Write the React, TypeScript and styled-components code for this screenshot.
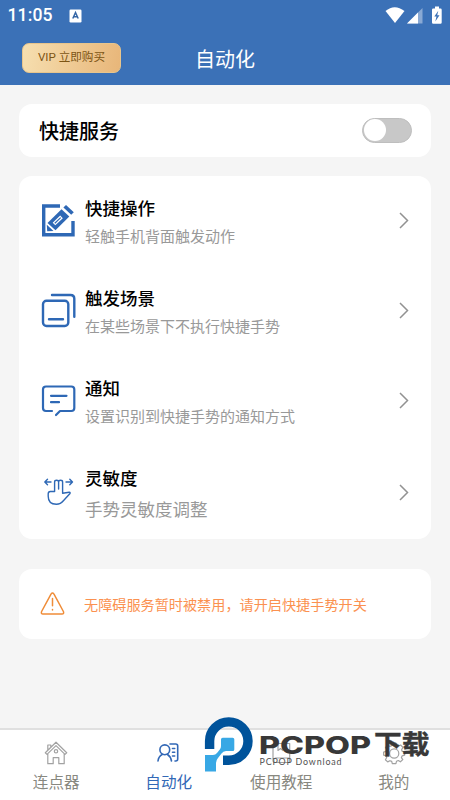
import React from "react";
import styled, { createGlobalStyle } from "styled-components";

const Global = createGlobalStyle`
  * { box-sizing: border-box; }
  body {
    margin: 0;
    background: #f5f5f5;
    font-family: "Noto Sans CJK SC", "Noto Sans", sans-serif;
  }
`;

const Screen = styled.div`
  width: 450px;
  height: 800px;
  display: flex;
  flex-direction: column;
  background: #f5f5f5;
  overflow: hidden;
`;

const Header = styled.header`
  height: 85px;
  flex: none;
  background: #3b71b7;
  color: #fff;
`;

const StatusBar = styled.div`
  height: 31px;
  padding: 0 8px 0 7.5px;
  display: flex;
  align-items: center;
  justify-content: space-between;
`;

const StatusGroup = styled.div`
  display: flex;
  align-items: center;
`;

const Clock = styled.span`
  width: 61px;
  font: 500 17.6px/31px Roboto, sans-serif;
  letter-spacing: 0.1px;
`;

const TitleBar = styled.div`
  height: 54px;
  padding: 0 22px;
  display: grid;
  grid-template-columns: 1fr auto 1fr;
  align-items: start;
`;

const VipButton = styled.button`
  width: 99px;
  height: 30px;
  margin-top: 11.5px;
  padding: 0 0 2px;
  border: 1px solid #e8c58c;
  border-radius: 7px;
  background: linear-gradient(100deg, #f6dfb0, #e8b679);
  color: #7d5514;
  font: 400 11.6px/24px Roboto, "Noto Sans CJK SC", sans-serif;
`;

const Title = styled.h1`
  margin: 13px 0 0;
  font-size: 20px;
  font-weight: 400;
  line-height: 30px;
`;

const Content = styled.main`
  flex: 1;
  padding: 19px 19px 0;
`;

const Card = styled.section<{ $height: number; $gap: number }>`
  height: ${(p) => p.$height}px;
  margin-bottom: ${(p) => p.$gap}px;
  border-radius: 13px;
  background: #fff;
  display: flex;
`;

const ServiceCard = styled(Card)`
  align-items: center;
  justify-content: space-between;
  padding: 0 19px 0 20px;
`;

const ServiceLabel = styled.span`
  font-size: 20px;
  font-weight: 500;
  line-height: 30px;
  color: #000;
`;

const Toggle = styled.div`
  width: 50px;
  height: 25px;
  margin-top: -1px;
  border-radius: 13px;
  padding: 0.5px;
  background: #c8c8c8;
  border: 1px solid #bebebe;
`;

const Knob = styled.div`
  width: 22px;
  height: 22px;
  border-radius: 50%;
  background: #fff;
`;

const ListCard = styled(Card)`
  flex-direction: column;
`;

const Row = styled.div<{ $shift: number }>`
  height: 90px;
  flex: none;
  display: grid;
  grid-template-columns: 66px 1fr 20px;
  padding-right: 16px;
  align-items: start;
  > svg { margin-top: ${(p) => 24 + p.$shift}px; }
  > svg:first-child { margin-left: 19px; }
`;

const RowTitle = styled.div`
  margin-top: 19px;
  height: 27px;
  font-size: 17.5px;
  font-weight: 500;
  line-height: 26px;
  color: #000;
`;

const RowNote = styled.div<{ $large?: boolean }>`
  margin-top: ${(p) => (p.$large ? 4 : 1)}px;
  font-size: ${(p) => (p.$large ? 17.5 : 15)}px;
  line-height: 26px;
  color: #999;
`;

const WarningCard = styled(Card)`
  align-items: center;
  padding-left: 20px;
  gap: 18px;
`;

const WarningText = styled.span`
  font-size: 14.15px;
  color: #fb9150;
`;

const TabBar = styled.nav`
  position: relative;
  flex: none;
  height: 72px;
  border-top: 2px solid #e0e0e0;
  background: #fff;
  display: grid;
  grid-template-columns: repeat(4, 1fr);
`;

const Tab = styled.div<{ $active?: boolean }>`
  display: flex;
  flex-direction: column;
  align-items: center;
  padding-top: 10px;
  gap: 3px;
  color: ${(p) => (p.$active ? "#3268b6" : "#888880")};
  font-size: 15.6px;
  line-height: 24px;
`;

const TabIcon = styled.svg.attrs({ width: 26, height: 26, viewBox: "0 0 26 26", fill: "none" })<{ $active?: boolean }>`
  stroke: ${(p) => (p.$active ? "#3268b6" : "#a2a2a2")};
  stroke-width: ${(p) => (p.$active ? 1.6 : 1.2)};
  stroke-linecap: round;
  stroke-linejoin: round;
`;

const Watermark = styled.svg`
  position: absolute;
  left: 200px;
  top: -20px;
`;

const Wordmark = styled.text`
  font: 800 24.3px Inter, sans-serif;
  fill: #383838;
`;

const WordmarkSuffix = styled.text`
  font: 700 26.5px "Noto Sans CJK SC", sans-serif;
  fill: #383838;
  stroke: #383838;
  stroke-width: 0.4px;
`;

const Tagline = styled.text`
  font: 400 8.9px Lato, sans-serif;
  fill: #505050;
`;

const RowIcon = styled.svg.attrs({ width: 40, height: 40, viewBox: "0 0 40 40", fill: "none" })<{ $weight?: number }>`
  stroke: #2e68b5;
  stroke-width: ${(p) => p.$weight ?? 2.4};
  stroke-linecap: round;
  stroke-linejoin: round;
`;

const EditIcon = () => (
  <RowIcon>
    <path d="M22 6H5.7v28.8H35V21" strokeWidth="3.4" strokeLinecap="butt" strokeLinejoin="miter" />
    <path d="M23.5 9.2L31.3 16.5L17.5 30.3L9.5 23Z" fill="#2e68b5" stroke="none" />
    <path d="M25.4 7.5L28 5L35.8 12.2L33.2 14.7ZM8.8 24.7L15.5 31L9.2 31.2Z" fill="#2e68b5" stroke="none" />
    <path d="M16 24L23.5 16.8" stroke="#fff" strokeWidth="3.8" strokeLinecap="butt" />
    <path d="M16.8 23.2L22.7 17.6" strokeWidth="1.2" strokeLinecap="butt" />
  </RowIcon>
);

const SceneIcon = () => (
  <RowIcon>
    <rect x="5" y="10.8" width="25.3" height="25.2" rx="3.5" />
    <path d="M14 5h18.5q3.8 0 3.8 3.8v18M11 29.3h14" />
  </RowIcon>
);

const NoticeIcon = () => (
  <RowIcon $weight={2.2}>
    <path d="M14 31H8q-3 0-3-3V9.5q0-3 3-3h25.3q3 0 3 3V28q0 3-3 3H22l-4 4M13 15.8h15.5M13 22.2h8" />
  </RowIcon>
);

const GestureIcon = () => (
  <RowIcon $weight={1.4}>
    <path d="M16.6 19.5V10q0-1.7 2-1.7t2 1.7v7V10q0-1.7 2-1.7t2 1.7v11.2l6.6-1q1.6.1.6 1.6L25.6 28.5q-3 3.8-7.2 3.8-8.2 0-8.2-8v-2.6q0-2.2 2.2-2.2h4.2" />
    <path d="M13 10H7m2.5-2.7L6.8 10l2.7 2.7M28 10h6.5m-2.7-2.7L34.5 10l-2.7 2.7" />
  </RowIcon>
);

const Chevron = () => (
  <svg width="20" height="40" viewBox="0 0 20 40" fill="none" stroke="#929292" strokeWidth="1.5">
    <path d="M5 13l7.5 7.5L5 28" />
  </svg>
);

const BrandMark = () => (
  <Watermark width="240" height="70" viewBox="0 0 240 70">
    <path d="M9.6 39V31.2A19.2 19.2 0 1 1 28.8 50.3H23" fill="none" stroke="#00539b" strokeWidth="9.4" />
    <path d="M22.7 27.7H32.7Q34.3 27.7 34.3 29.3V39.5Q34.3 41 32.8 41H26Q23 41 21.5 43.5L18 48Q16 50.3 16 53V61.5H5V45H13Q15.5 45 17 43L20 39.2Q21 38 21 36V29.4Q21 27.7 22.7 27.7Z" fill="#38a8e5" />
    <Wordmark x="59" y="43.5" textLength="112" lengthAdjust="spacingAndGlyphs">PCPOP</Wordmark>
    <WordmarkSuffix x="174" y="44" textLength="55.5" lengthAdjust="spacingAndGlyphs">下载</WordmarkSuffix>
    <Tagline x="59.5" y="55" textLength="82" lengthAdjust="spacing">PCPOP Download</Tagline>
  </Watermark>
);

const rows = [
  { title: "快捷操作", note: "轻触手机背面触发动作", Icon: EditIcon },
  { title: "触发场景", note: "在某些场景下不执行快捷手势", Icon: SceneIcon },
  { title: "通知", note: "设置识别到快捷手势的通知方式", Icon: NoticeIcon },
  { title: "灵敏度", note: "手势灵敏度调整", Icon: GestureIcon, large: true },
];

export default function App() {
  return (
    <Screen>
      <Global />
      <Header>
        <StatusBar>
          <StatusGroup>
            <Clock>11:05</Clock>
            <svg width="13" height="14" viewBox="0 0 13 14">
              <rect x=".5" y=".5" width="12" height="13" rx="1.2" fill="#fff" />
              <path d="M3.8 9.5L6.5 3.5L9.2 9.5M4.8 7.8h3.4" fill="none" stroke="#3465a5" strokeWidth="1.5" />
            </svg>
          </StatusGroup>
          <svg width="57" height="20" viewBox="0 0 57 20" fill="#fff">
            <path d="M0.5 5Q9.5-2.7 19.5 5L10 17Z" />
            <path d="M22 17.5L37.5 2v15.5Z" opacity=".4" />
            <path d="M22 17.5L33 6.5v11Z" />
            <path d="M50 .5h4v2h1.5q1.2 0 1.2 1.2v12.8q0 1.2-1.2 1.2h-7.3q-1.2 0-1.2-1.2V3.7q0-1.2 1.2-1.2H50Z" />
            <path d="M53.3 4.8L49.3 10.5H51.5L50.3 15.5L54.5 9.3H52.2Z" fill="#3b71b7" />
          </svg>
        </StatusBar>
        <TitleBar>
          <VipButton>VIP 立即购买</VipButton>
          <Title>自动化</Title>
        </TitleBar>
      </Header>
      <Content>
        <ServiceCard $height={53} $gap={19}>
          <ServiceLabel>快捷服务</ServiceLabel>
          <Toggle><Knob /></Toggle>
        </ServiceCard>
        <ListCard $height={363} $gap={30}>
          {rows.map(({ title, note, Icon, large }) => (
            <Row key={title} $shift={large ? 2 : 0}>
              <Icon />
              <div>
                <RowTitle>{title}</RowTitle>
                <RowNote $large={large}>{note}</RowNote>
              </div>
              <Chevron />
            </Row>
          ))}
        </ListCard>
        <WarningCard $height={70} $gap={0}>
          <svg width="27" height="26" viewBox="0 0 27 26" fill="none" stroke="#ef8c38" strokeWidth="1.5" strokeLinecap="round" strokeLinejoin="round">
            <path d="M12 3.1q1.5-2 3 0L24.4 20.5q.9 2.5-1.4 2.5H4q-2.3 0-1.4-2.5ZM13.5 7.5v7.3M13.5 18.5v.6" />
          </svg>
          <WarningText>无障碍服务暂时被禁用，请开启快捷手势开关</WarningText>
        </WarningCard>
      </Content>
      <TabBar>
        <Tab>
          <TabIcon>
            <path d="M2.3 12.8L13 2.2L23.7 12.8L22 14.4L13 5.6L4 14.4ZM4.8 14v9.7h5.4v-6h5.6v6h5.4V14M4.8 10V5h3v2" />
            <circle cx="13" cy="11.3" r="1.7" />
          </TabIcon>
          连点器
        </Tab>
        <Tab $active>
          <TabIcon $active>
            <circle cx="8.8" cy="9.8" r="4.9" />
            <path d="M2 21q.5-4.5 4.2-6.5M11.5 14.5q3.2 2 4 6.5M14 4h5.7q2 0 2 2v13q0 2-2 2h-.7M16.5 8.5h2.2M16.5 12.2h2.2M16.5 16h2.2" />
          </TabIcon>
          自动化
        </Tab>
        <Tab>
          <TabIcon>
            <path d="M5.5 3.5h16.2v19H7.2q-2.2 0-2.2-2.3V5.5q0-2 2-2M5 20q.3-2 2.5-2h14.2M10 3.5v7l2.5-2 2.5 2v-7" />
          </TabIcon>
          使用教程
        </Tab>
        <Tab>
          <TabIcon>
            <path d="M11.3 3h3.6l.6 2.4 1.8.8L19.6 5l2.4 2.4-1.4 2.3.7 1.7 2.3.6v3.2l-2.4.6-.8 1.8 1.4 2-2.4 2.2-2.1-1.3-1.8.8-.6 2.3h-3.6l-.6-2.2-1.8-.7-2.2 1.2-2.3-2.2 1.3-2.2-.8-1.8-2.3-.6v-3l2.4-.7.8-1.8-1.3-2.2L6.8 5.1l2.1 1.3 1.8-.8Z" />
            <circle cx="13.2" cy="13.5" r="4.6" />
          </TabIcon>
          我的
        </Tab>
        <BrandMark />
      </TabBar>
    </Screen>
  );
}
